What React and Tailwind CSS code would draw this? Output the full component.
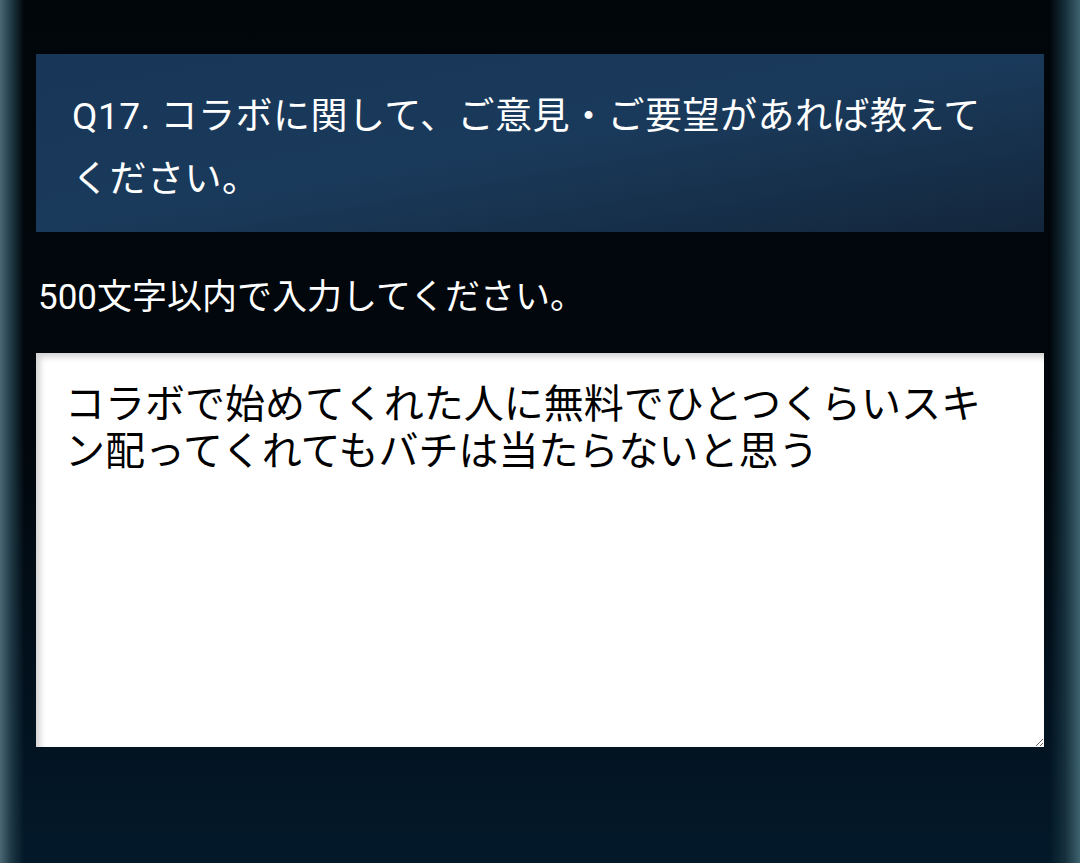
const FONT = { fontFamily: 'Roboto, "Noto Sans CJK JP", "Noto Sans", sans-serif' };

export default function App() {
  return (
    <div
      className="flex h-[863px] w-full overflow-hidden bg-gradient-to-b from-[#01060a] via-[#01070c] to-[#03192a]"
      style={FONT}
    >
      <div className="w-[24px] shrink-0 bg-gradient-to-r from-[#4a6874] via-[#1c3642] to-transparent" />

      <main className="flex flex-1 flex-col pl-[12px] pr-[6px] pt-[54px]">
        <section className="h-[178px] bg-gradient-to-br from-[#173658] via-[#1a3a5b] to-[#13263b] pl-[36px] pr-[50px] pt-[31px]">
          <h1 className="text-[37px] font-normal leading-[63px] tracking-[0.5px] text-white">
            Q17. コラボに関して、ご意見・ご要望があれば教えてください。
          </h1>
        </section>

        <p className="mt-[46px] pl-[2px] text-[35px] leading-[40px] text-white">
          500文字以内で入力してください。
        </p>

        <textarea
          className="mt-[35px] h-[394px] w-full resize bg-white pl-[29px] pr-[31px] pt-[28px] text-[40px] leading-[47px] text-black shadow-[inset_4px_4px_6px_rgba(0,0,0,0.18)] outline-none"
          style={FONT}
          defaultValue="コラボで始めてくれた人に無料でひとつくらいスキン配ってくれてもバチは当たらないと思う"
        />
      </main>

      <div className="w-[30px] shrink-0 bg-gradient-to-l from-[#3f6370] via-[#15303c] to-transparent" />
    </div>
  );
}
